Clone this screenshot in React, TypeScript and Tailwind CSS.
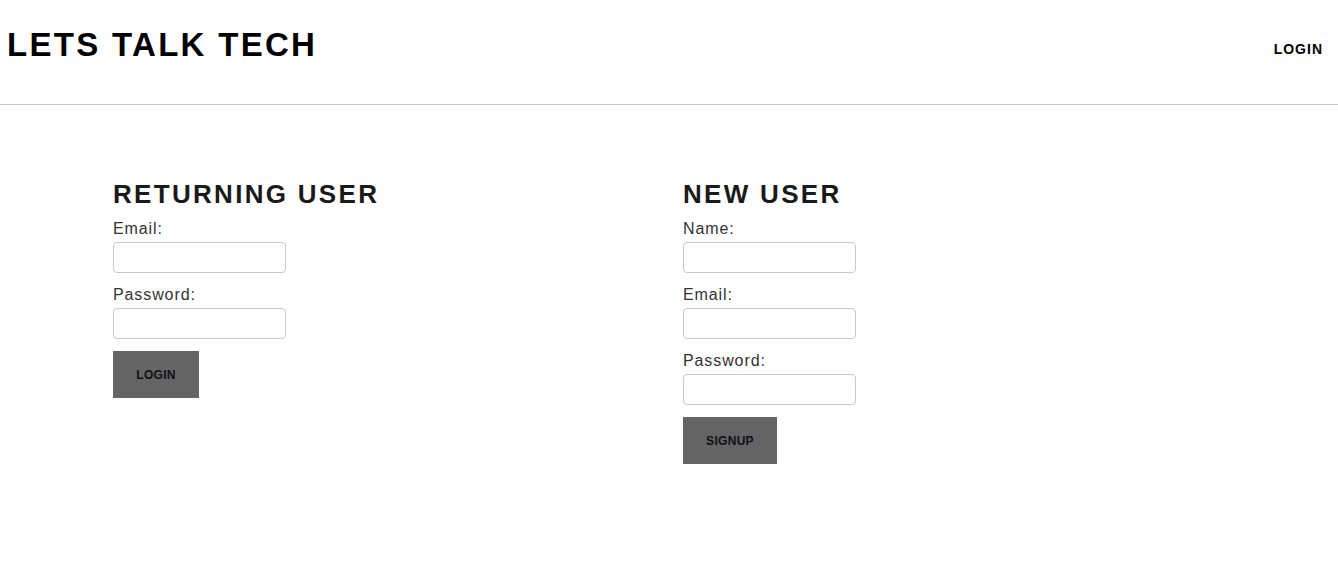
import React from 'react';

const font = { fontFamily: '"Liberation Sans", Arial, sans-serif' };

function Field({ label }: { label: string }) {
  return (
    <div className="mb-3 flex flex-col">
      <label className="text-[16px] leading-[20px] tracking-[0.9px] text-[#333] mb-[3px]">{label}</label>
      <input className="w-[173px] h-[31px] border border-[#c8c8c8] rounded-[4px] bg-white outline-none" />
    </div>
  );
}

function FormColumn({ title, fields, button, btnWidth }: { title: string; fields: string[]; button: string; btnWidth: string }) {
  return (
    <div className="flex flex-col items-start">
      <h2 className="text-[26px] leading-[30px] font-bold tracking-[2.3px] text-[#1a1a1a] mb-[10px]">{title}</h2>
      {fields.map((f) => (
        <Field key={f} label={f} />
      ))}
      <button className={`${btnWidth} h-[47px] bg-[#646466] text-[12px] font-bold text-[#111] tracking-[0.3px]`}>{button}</button>
    </div>
  );
}

export default function App() {
  return (
    <div className="min-h-screen bg-white" style={font}>
      <header className="h-[105px] border-b border-[#c8c8c8] flex items-start justify-between">
        <h1 className="pl-[7px] pt-[28px] text-[33px] leading-[33px] font-bold tracking-[2.3px] text-black">LETS TALK TECH</h1>
        <a className="pr-[15px] pt-[41px] text-[14px] leading-[16px] font-bold tracking-[1px] text-black">LOGIN</a>
      </header>
      <main className="pl-[113px] pt-[74px] grid grid-cols-[570px_570px]">
        <FormColumn title="RETURNING USER" fields={['Email:', 'Password:']} button="LOGIN" btnWidth="w-[86px]" />
        <FormColumn title="NEW USER" fields={['Name:', 'Email:', 'Password:']} button="SIGNUP" btnWidth="w-[94px]" />
      </main>
    </div>
  );
}
